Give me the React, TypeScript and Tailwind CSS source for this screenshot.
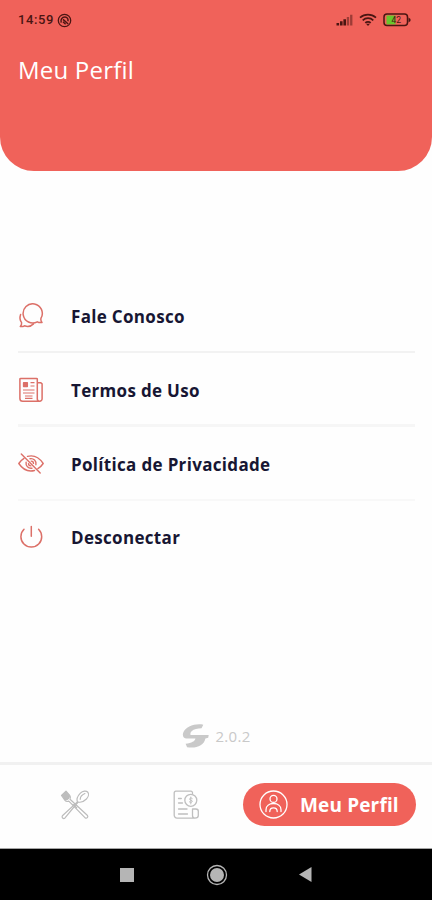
import type { ReactNode } from "react";

interface MenuItem {
  label: string;
  icon: ReactNode;
  row: string;
}

const ChatIcon = () => (
  <svg width="26" height="26" viewBox="0 0 26 26" fill="none" stroke="currentColor" strokeWidth="1.5" strokeLinecap="round" strokeLinejoin="round">
    <path d="M24 19.400c-1.700.3-3.400.1-4.700-.6A9.600 9.600 0 1 1 23 15.200c-.4 1.600 0 3 1 4.200Z" />
    <path d="M2.600 11.400c-1 2.900-.7 5.900 1 8.200.2 1.700-.3 2.800-1.300 3.900 1.500.3 2.900 0 4.200-.7 3.300 1.300 6.400.700 9-1.900" />
  </svg>
);

const NewsIcon = () => (
  <svg width="26" height="26" viewBox="0 0 26 26" fill="none" stroke="currentColor" strokeWidth="1.5" strokeLinejoin="round">
    <path d="M19.300 22V2.200a.8.8 0 0 0-.8-.8H2.700a.8.8 0 0 0-.8.8v19.200a2.800 2.800 0 0 0 2.800 2.800h17a2.400 2.400 0 0 0 2.400-2.400V6.900l-1.500-1.200h-3.300V22a2.200 2.200 0 0 0 2.200 2.200" />
    <rect x="5.600" y="5.700" width="3.700" height="3.700" fill="currentColor" />
    <path d="M12.500 5.700h4M12.500 9h4M5 13h11.500M5 16h11.500M7 19h7.500M7 21.300h7.500" strokeWidth="1.200" />
  </svg>
);

const EyeOffIcon = () => (
  <svg width="26" height="26" viewBox="0 0 26 26" fill="none" stroke="currentColor" strokeWidth="1.400" strokeLinecap="round" strokeLinejoin="round">
    <path d="M9.500 5.400C16.200 3.600 21.500 7 25.200 12.500c-1.500 2.200-3.300 4-5.300 5.200M16.500 19.500C9.800 21.300 4.500 18 .8 12.500c1.500-2.300 3.200-4 5.200-5.200" />
    <path d="M12 7.700c3.600-.6 6.600 2.300 5.900 6M14 17.200c-3.600.6-6.500-2.200-5.900-5.900M13.200 10.100c1.300 0 2.300 1 2.300 2.300M12.800 14.900c-1.300 0-2.300-1-2.300-2.300" />
    <path d="m3.300 3 18.900 19" />
  </svg>
);

const PowerIcon = () => (
  <svg width="26" height="26" viewBox="0 0 26 26" fill="none" stroke="currentColor" strokeWidth="1.500" strokeLinecap="round">
    <path d="M6 4.300a10.400 10.400 0 1 0 14.600 0M13.300 1.600v9.600" />
  </svg>
);

const items: MenuItem[] = [
  { label: "Fale Conosco", icon: <ChatIcon />, row: "h-[74px] pt-0.5 border-b-2 border-[#f2f2f2]" },
  { label: "Termos de Uso", icon: <NewsIcon />, row: "h-[74px] pt-[3px] border-b-[3px] border-[#f6f6f6]" },
  { label: "Política de Privacidade", icon: <EyeOffIcon />, row: "h-[74px] pt-0.5 border-b-2 border-[#f8f8f8]" },
  { label: "Desconectar", icon: <PowerIcon />, row: "h-[72px] pt-px" },
];

const StatusBar = () => (
  <div className="flex h-10 items-center justify-between pr-[21px] pl-[18px] text-[#4a1512]">
    <div className="flex items-center gap-[3px]">
      <span className="font-['Roboto',sans-serif] text-[13px] leading-4 font-medium tracking-[0.6px]">14:59</span>
      <svg width="15" height="15" viewBox="0 0 15 15" fill="none" stroke="currentColor">
        <circle cx="7.500" cy="7.500" r="6.200" strokeWidth="1.300" />
        <path d="M4.200 9.600C3.200 6.300 5.200 4 8 4.100c2.300.1 3.500 2.100 2.900 4.200M6 6.400l5.200 4.600M6 8.800l2.600 2.400" strokeWidth="1.500" />
      </svg>
    </div>
    <div className="flex items-center gap-[6px]">
      <svg width="17" height="12" viewBox="0 0 17 12" fill="currentColor">
        <path d="M.5 9h2.600v2.500H.5zM4 7.200h2.600v4.300H4zM7.400 5.200H10v6.300H7.400z" />
        <path d="M10.800 3h2.300v8.500h-2.300zM14.100.7h2.300v10.800h-2.300z" opacity=".5" />
      </svg>
      <svg width="18" height="14" viewBox="0 0 18 14" fill="none" stroke="currentColor" strokeWidth="1.700">
        <path d="M1 4.600c4.600-4 11.400-4 16 0M3.700 7.300c3-2.800 7.600-2.800 10.600 0M6.300 9.900c1.500-1.500 3.900-1.500 5.400 0" />
        <path d="m7 10.800 2 2.200 2-2.200Z" fill="currentColor" stroke="none" />
      </svg>
      <svg width="28" height="14" viewBox="0 0 28 14">
        <path d="M3.500 2.500h9v9h-9z" fill="#68c52c" />
        <rect x="1" y="1" width="23.500" height="11.500" rx="3" fill="none" stroke="currentColor" strokeWidth="1.500" />
        <path d="M25.500 4.500 27.500 6v2l-2 1.500Z" fill="currentColor" />
        <text x="13.300" y="9.800" textAnchor="middle" fontSize="8.500" fontFamily="Roboto, sans-serif" fill="currentColor">42</text>
      </svg>
    </div>
  </div>
);

const CutleryIcon = () => (
  <svg width="30" height="30" viewBox="0 0 30 30" fill="none" stroke="#bcbcbc" strokeWidth="1.200" strokeLinecap="round" strokeLinejoin="round">
    <path d="M1.500 5.500 6 1.200l3.700 4.100c1.200 1.500.9 2.800.3 4l17.500 16.200c1 1.700-.7 3.300-2.300 2.400L8.800 11.100c-1.300.6-2.900.4-3.800-.7Z" fill="white" />
    <path d="m2.200 5.400 3.600-3.500 3.300 3.800c1.200 1.700-1.900 5-3.700 4Z" fill="#bdbdbd" />
    <path d="M17.400 11.900c-1-2.600.4-6 3-8.700 2.500-2.500 5.800-2.700 7.200-1.200s1.100 4.500-1.200 7c-2.600 2.600-5.900 3.700-8.300 3L4.800 28.200c-1.500 1-3.500-.7-2.400-2.400Z" fill="white" />
    <path d="M20.200 9.300c.1-2.200 1.800-4.600 4.700-5.800" />
    <path d="m13 14.500 3.700 3.300" />
  </svg>
);

const OrdersIcon = () => (
  <svg width="28" height="30" viewBox="0 0 28 30" fill="none" stroke="#bfbfbf" strokeWidth="1.300" strokeLinecap="round" strokeLinejoin="round">
    <path d="M20.500 3.500V2.800a1.600 1.600 0 0 0-1.600-1.600H3.800a1.600 1.600 0 0 0-1.600 1.600v22.500a2.800 2.800 0 0 0 2.800 2.800h17.500M20.500 19v6.500c0 1.600.8 2.600 2.400 2.600s3.400-.9 3.400-2.600v-4.300c0-1.400-1-2.200-2.400-2.200Z" />
    <circle cx="18.800" cy="10.300" r="6" fill="white" />
    <path d="M20.300 8.500c-.8-.8-2.700-.6-2.700.6 0 1.500 2.700.8 2.700 2.200 0 1.200-1.900 1.400-2.900.6M18.800 7v7" strokeWidth="1" />
    <path d="M6.500 8.500h2.800M6.500 13h4M6.500 19h8.500M6.500 24h9" />
  </svg>
);

const TabBar = () => (
  <nav className="flex h-[87px] items-center border-t-[3px] border-b border-t-[#f1f1f1] border-b-[#a5a5a5] pr-4 pb-1">
    <div className="flex w-[149px] justify-center">
      <CutleryIcon />
    </div>
    <div className="flex w-[94px] justify-center pr-[20px]">
      <OrdersIcon />
    </div>
    <button className="flex h-[43px] w-[173px] items-center gap-3 rounded-full bg-[#f0625a] pl-4 text-white">
      <svg width="29" height="29" viewBox="0 0 29 29" fill="none" stroke="currentColor" strokeWidth="1.300" strokeLinecap="round">
        <circle cx="14.500" cy="14.500" r="13.500" />
        <circle cx="14.500" cy="8.900" r="3.500" />
        <path d="M7 21.500v-1.800c0-3.900 3.200-6.200 7.500-6.200s7.500 2.300 7.500 6.200v1.800M10.800 21.500c0-2.300 1.300-3.700 3.700-3.700s3.700 1.400 3.700 3.700" />
      </svg>
      <span className="text-[19px] leading-6 font-bold tracking-[0.15px] whitespace-nowrap">Meu Perfil</span>
    </button>
  </nav>
);

const App = () => (
  <div className="flex h-[900px] w-[432px] flex-col overflow-hidden bg-[#fefefe] font-['Open_Sans',sans-serif]">
    <header className="h-[171px] shrink-0 rounded-b-[34px] bg-[#f0625a]">
      <StatusBar />
      <h1 className="mt-[14px] pl-[18px] text-[24px] leading-8 tracking-[0.2px] text-white">Meu Perfil</h1>
    </header>

    <ul className="mt-[108px] mr-[17px] ml-[18px]">
      {items.map((item) => (
        <li key={item.label} className={`flex items-center gap-[27px] text-[#dc7068] ${item.row}`}>
          {item.icon}
          <span className="pt-px text-[17px] leading-6 font-bold tracking-[0.32px] text-[#171633]">{item.label}</span>
        </li>
      ))}
    </ul>

    <div className="mt-auto mb-[14px] flex items-center justify-center gap-[6px] pl-px text-[#c9c9c9]">
      <svg width="27" height="24" viewBox="0 0 27 24" fill="currentColor">
        <path d="M21.300.8C14-.8 3.500 2 1.100 9c-.9 3.200.6 5.500 3.500 5.500h8.800c-.3 2.600-3.700 4.600-9.800 5.200l1.500 3.500c8.800 1.600 17-1.500 18.300-8.700l2.800-.8.500-2.700H9.300c-1.400 0-1.300-2.100.3-3.700C12 5 15.600 4.300 19.500 4.300Z" />
      </svg>
      <span className="text-[15px] leading-6 tracking-[0.3px]">2.0.2</span>
    </div>

    <TabBar />

    <div className="flex h-[51px] shrink-0 items-center bg-black pl-[120px] text-[#b5b5b5]">
      <div className="size-[14px] bg-current" />
      <svg className="ml-[72px]" width="22" height="22" viewBox="0 0 22 22" fill="none" stroke="currentColor" strokeWidth="1.300">
        <circle cx="11" cy="11" r="9.500" />
        <circle cx="11" cy="11" r="7" fill="currentColor" stroke="none" />
      </svg>
      <svg className="ml-[71px]" width="13" height="15" viewBox="0 0 13 15" fill="currentColor">
        <path d="M0 7.500 12.500 0v15Z" />
      </svg>
    </div>
  </div>
);

export default App;
